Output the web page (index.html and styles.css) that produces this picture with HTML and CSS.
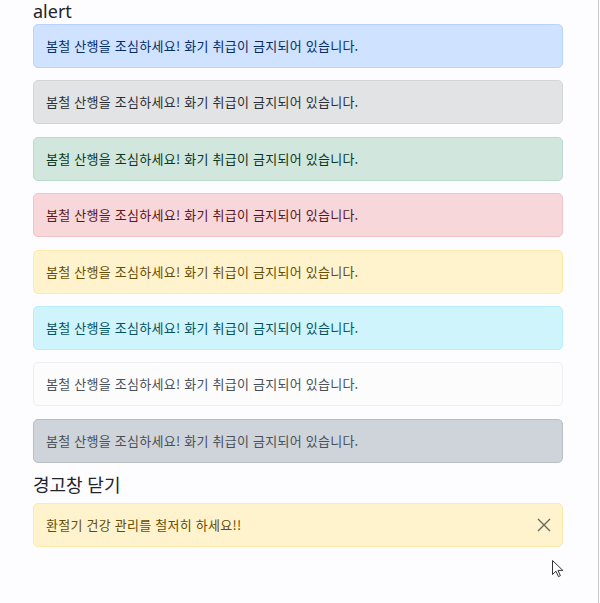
FILE: index.html
```html
<!DOCTYPE html>
<html lang="ko">
<head>
<meta charset="utf-8">
<title>alert</title>
<link rel="stylesheet" href="styles.css">
</head>
<body>
<div class="page">
  <div class="container">
    <h4 class="title title-top">alert</h4>
    <div class="alert alert-primary">봄철 산행을 조심하세요! 화기 취급이 금지되어 있습니다.</div>
    <div class="alert alert-secondary">봄철 산행을 조심하세요! 화기 취급이 금지되어 있습니다.</div>
    <div class="alert alert-success">봄철 산행을 조심하세요! 화기 취급이 금지되어 있습니다.</div>
    <div class="alert alert-danger">봄철 산행을 조심하세요! 화기 취급이 금지되어 있습니다.</div>
    <div class="alert alert-warning">봄철 산행을 조심하세요! 화기 취급이 금지되어 있습니다.</div>
    <div class="alert alert-info">봄철 산행을 조심하세요! 화기 취급이 금지되어 있습니다.</div>
    <div class="alert alert-light">봄철 산행을 조심하세요! 화기 취급이 금지되어 있습니다.</div>
    <div class="alert alert-dark">봄철 산행을 조심하세요! 화기 취급이 금지되어 있습니다.</div>
    <h4 class="title">경고창 닫기</h4>
    <div class="alert alert-warning alert-dismissible">
      <span>환절기 건강 관리를 철저히 하세요!!</span>
      <button class="btn-close" type="button" aria-label="Close">
        <svg width="14" height="14" viewBox="0 0 14 14"><path d="M1 1L13 13M13 1L1 13" stroke="#6b675c" stroke-width="1.4" fill="none"/></svg>
      </button>
    </div>
  </div>
  <svg class="cursor" width="12" height="18" viewBox="0 0 12 18"><path d="M0.5 0.5V14.5L4 11.2L6.4 16.6L8.4 15.7L6 10.4H10.8Z" fill="#fff" stroke="#333" stroke-width="1"/></svg>
</div>
</body>
</html>
```
FILE: styles.css
```css
html, body {
  margin: 0;
  padding: 0;
}
body {
  background: #fdfcff;
  font-family: "Noto Sans", "Noto Sans CJK KR", sans-serif;
  color: #212529;
}
.page {
  position: relative;
  box-sizing: border-box;
  width: 599px;
  height: 603px;
  padding-top: 2px;
  border-right: 1px solid #c8c8c8;
  overflow: hidden;
}
.container {
  width: 530px;
  margin-left: 33px;
}
.title {
  font-family: "Noto Sans", "Noto Sans CJK KR", sans-serif;
  font-size: 18px;
  font-weight: 400;
  line-height: 21.6px;
  margin: 0 0 6px;
  color: #212529;
}
.title-top {
  line-height: 19.6px;
  margin: 0 0 2.4px;
}
.alert {
  box-sizing: border-box;
  height: 44px;
  padding: 12px 12px;
  margin-bottom: 12.4px;
  border: 1px solid transparent;
  border-radius: 5px;
  font-family: "Noto Sans CJK KR", sans-serif;
  font-size: 13px;
  letter-spacing: 0.25px;
  line-height: 18px;
}
.alert-primary { background: #cfe2ff; border-color: #b6d4fe; color: #052c65; }
.alert-secondary { background: #e2e3e5; border-color: #d3d6d8; color: #2b2f32; }
.alert-success { background: #d1e7dd; border-color: #badbcc; color: #0a3622; }
.alert-danger { background: #f8d7da; border-color: #f1c2c7; color: #58151c; }
.alert-warning { background: #fff3cd; border-color: #ffe9a8; color: #664d03; }
.alert-info { background: #cff4fc; border-color: #b6effb; color: #055160; }
.alert-light { background: #fcfcfd; border-color: #eceef1; color: #495057; }
.alert-dark { background: #ced4da; border-color: #b8bec4; color: #495057; }
.alert-dismissible {
  display: flex;
  align-items: center;
  justify-content: space-between;
  padding-right: 11px;
}
.btn-close {
  display: flex;
  align-items: center;
  justify-content: center;
  width: 14px;
  height: 14px;
  padding: 0;
  border: 0;
  background: transparent;
}
.cursor {
  position: absolute;
  left: 552px;
  top: 560px;
}
```
